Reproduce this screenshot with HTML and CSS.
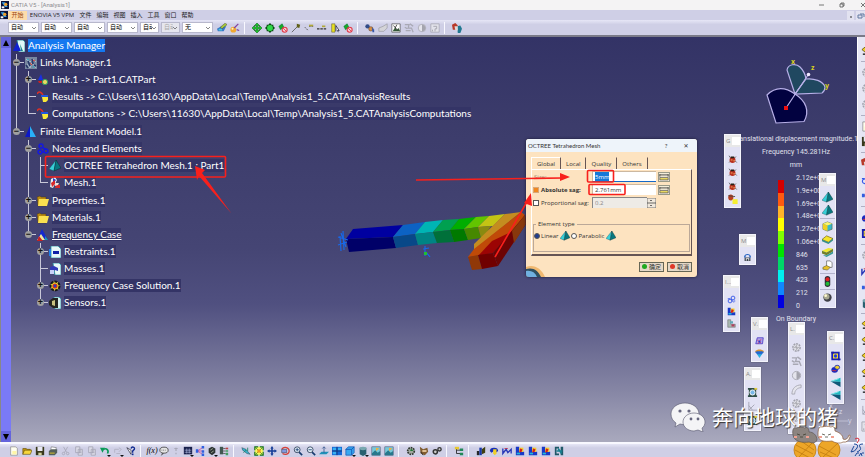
FILE: index.html
```html
<!DOCTYPE html>
<html lang="en">
<head>
<meta charset="utf-8">
<title>CATIA V5 - [Analysis1]</title>
<link rel="stylesheet" href="styles.css">
</head>
<body>
<svg class="defs" aria-hidden="true">
  <symbol id="app" viewBox="0 0 12 12"><rect width="12" height="12" fill="#0b1238"/><path d="M1 2h5l4 7H6z" fill="#39a0e8"/><circle cx="7" cy="5" r="2.500" fill="#f0a028"/><path d="M1 8h4v3H1z" fill="#fff"/></symbol>
  <symbol id="new" viewBox="0 0 12 12"><path d="M2 1h6l2 2v8H2z" fill="#fffef0" stroke="#777" stroke-width=".7"/><path d="M4 6h5v4H4z" fill="#fff6a8"/></symbol>
  <symbol id="open" viewBox="0 0 12 12"><path d="M1 10V3h4l1 1h4v2" fill="#c89a10" stroke="#5c4600" stroke-width=".7"/><path d="M1 10l2-5h9l-2 5z" fill="#f7d63c" stroke="#5c4600" stroke-width=".7"/></symbol>
  <symbol id="save" viewBox="0 0 12 12"><path d="M1 1h10v10H1z" fill="#38381c"/><path d="M3 1h6v5H3z" fill="#e8e8f4"/><path d="M4 8h4v3H4z" fill="#d4d4a0"/></symbol>
  <symbol id="print" viewBox="0 0 12 12"><path d="M4 1l6 1-1 4H3z" fill="#fff" stroke="#555" stroke-width=".6"/><path d="M1 6l3-2h7v4l-3 3H1z" fill="#55605c"/><path d="M2 8h6v1H2z" fill="#f0d020"/></symbol>
  <symbol id="cut" viewBox="0 0 12 12"><path d="M3 1l4 7M8 1L4 8" stroke="#a8a8b8" fill="none"/><circle cx="3" cy="9" r="1.500" stroke="#a8a8b8" fill="none"/><circle cx="8" cy="9" r="1.500" stroke="#a8a8b8" fill="none"/></symbol>
  <symbol id="copy" viewBox="0 0 12 12"><path d="M2 1h5v7H2zM5 4h5v7H5z" stroke="#a4a4b4" fill="#dcdce8"/><path d="M6 6h3M6 8h3" stroke="#a4a4b4"/></symbol>
  <symbol id="undo" viewBox="0 0 12 12"><path d="M4 4c4-2 7 1 5 5" fill="none" stroke="#0a9a58" stroke-width="2"/><path d="M0 2l6 0-3 6z" fill="#0a9a58"/></symbol>
  <symbol id="redo" viewBox="0 0 12 12"><path d="M2 8V4h5M7 2l3 2-3 3M4 9h5" fill="none" stroke="#b0b0c0"/></symbol>
  <symbol id="help" viewBox="0 0 12 12"><path d="M1 2l5 8V5z" fill="#fff" stroke="#223" stroke-width=".8"/><path d="M6 3c1-3 5-2 4 1L8 6v2" fill="none" stroke="#102a90" stroke-width="1.600"/><path d="M7 9h2v2H7z" fill="#102a90"/></symbol>
  <symbol id="bubble" viewBox="0 0 12 12"><ellipse cx="6" cy="5" rx="5" ry="3.600" fill="#e4e4e4" stroke="#444"/><path d="M4 8l-2 4 4-3" fill="#555"/><path d="M3 5h6" stroke="#666" stroke-dasharray="1 1"/></symbol>
  <symbol id="dim" viewBox="0 0 12 12"><path d="M6 2v4M6 8v2M4 3h4" stroke="#a8a8b8" stroke-width="1.400"/></symbol>
  <symbol id="table" viewBox="0 0 12 12"><rect x="1" y="1" width="10" height="9" fill="#18204c"/><path d="M2 5h8M2 7.500h8M4.500 3v6M7.500 3v6" stroke="#c0c8f0" stroke-width=".7"/></symbol>
  <symbol id="graph" viewBox="0 0 12 12"><path d="M3 6l6-4M3 6h6M3 6l6 4" stroke="#d050a0"/><path d="M1 4h3v4H1zM8 0h3v3H8zM8 5h3v3H8zM8 9h3v3H8z" fill="#3060e0"/></symbol>
  <symbol id="shield" viewBox="0 0 12 12"><path d="M2 3l4-2 4 2v5l-4 3-4-3z" fill="#2c3434"/><path d="M4 5l3-2M5 8l3-2" stroke="#aab4a0"/></symbol>
  <symbol id="struct" viewBox="0 0 12 12"><path d="M1 1h4v9H1z" fill="#405850"/><path d="M5 3h3M5 6h3M5 9h3" stroke="#555"/><path d="M8 2h3v2H8z" fill="#c04040"/><path d="M8 5h3v2H8zM8 8h3v3H8z" fill="#40a060"/></symbol>
  <symbol id="fly" viewBox="0 0 12 12"><path d="M1 2l5 2 5 6-4-1-5-4z" fill="#38b0c8" stroke="#234" stroke-width=".5"/><path d="M3 8l3-3M8 2v4" stroke="#1c8060"/></symbol>
  <symbol id="fit" viewBox="0 0 12 12"><rect x="1" y="1" width="10" height="10" fill="#f8f860"/><path d="M1 5V1h4M7 1h4v4M11 7v4H7M5 11H1V7" fill="none" stroke="#107020" stroke-width="1.400"/><path d="M2 2l8 8M10 2l-8 8" stroke="#107020" stroke-width=".8"/><rect x="4" y="4" width="4" height="4" fill="#ef9b20"/></symbol>
  <symbol id="pan" viewBox="0 0 12 12"><path d="M6 0l2 3H7v2h2V4l3 2-3 2V7H7v2h1l-2 3-2-3h1V7H3v1L0 6l3-2v1h2V3H4z" fill="#173f98"/></symbol>
  <symbol id="rotate" viewBox="0 0 12 12"><path d="M2 4c3-4 9-2 9 2s-5 5-8 3" fill="none" stroke="#d84038" stroke-width="1.500"/><path d="M2 4h6v4H2z" fill="#8098e0" stroke="#334" stroke-width=".6"/></symbol>
  <symbol id="zin" viewBox="0 0 12 12"><path d="M7 7l4 4" stroke="#173a70" stroke-width="2"/><circle cx="5" cy="4.500" r="3.500" fill="#e4f0f8" stroke="#2b3c58"/><path d="M3 4.500h4M5 2.500v4" stroke="#173a70"/></symbol>
  <symbol id="zout" viewBox="0 0 12 12"><path d="M7 7l4 4" stroke="#173a70" stroke-width="2"/><circle cx="5" cy="4.500" r="3.500" fill="#e4f0f8" stroke="#2b3c58"/><path d="M3 4.500h4" stroke="#173a70"/></symbol>
  <symbol id="normal" viewBox="0 0 12 12"><path d="M0 10l3-3h9l-3 3z" fill="#2090b8"/><path d="M6 8V1M4 3l2-2 2 2" stroke="#385890" fill="none"/></symbol>
  <symbol id="views" viewBox="0 0 12 12"><rect x="0" y="1" width="12" height="10" fill="#1468d8"/><path d="M1 2h4v3H1zM7 2h4v3H7zM1 7h4v3H1z" fill="#38b0f0"/><path d="M6 1v10M0 6h12" stroke="#123070"/></symbol>
  <symbol id="cube" viewBox="0 0 12 12"><path d="M1 4l3-3h7v7l-3 3H1z" fill="#38a8f0" stroke="#1450b0" stroke-width=".8"/><path d="M1 4h7v7M8 4l3-3" fill="none" stroke="#1450b0"/></symbol>
  <symbol id="cyl" viewBox="0 0 12 12"><path d="M2 2h8v8l-4 2-4-2z" fill="#296070"/><ellipse cx="6" cy="3" rx="4" ry="2" fill="#78a8b0"/></symbol>
  <symbol id="img" viewBox="0 0 12 12"><rect x="1" y="1" width="10" height="10" fill="#78c8d8" stroke="#446" stroke-width=".6"/><path d="M1 9l4-4 3 3 3-2v5H1z" fill="#28788c"/><path d="M6 2l4 1-4 3z" fill="#f0b040"/></symbol>
  <symbol id="gear" viewBox="0 0 12 12"><circle cx="6" cy="6" r="4" fill="#a0a8a0" stroke="#303830" stroke-width="2" stroke-dasharray="2 1"/><path d="M5 6h4L6 3z" fill="#207838"/></symbol>
  <symbol id="horse" viewBox="0 0 12 12"><path d="M1 1l4 3 5-2 1 5-4 4-5-2z" fill="#805c30"/><path d="M4 5h5v2H4z" fill="#f0d4a8"/><path d="M2 7l3 4" stroke="#222"/></symbol>
  <symbol id="gears" viewBox="0 0 12 12"><circle cx="4" cy="7" r="2.500" fill="#ccc" stroke="#333" stroke-width="1.800"/><circle cx="9" cy="4" r="2" fill="#ccc" stroke="#333" stroke-width="1.600"/></symbol>
  <symbol id="tree" viewBox="0 0 12 12"><path d="M3 2v7h5M3 5h5" stroke="#222" fill="none"/><path d="M1 1h5v3H1z" fill="#e8c830"/><path d="M7 3h4v3H7zM7 8h4v3H7z" fill="#208858"/></symbol>
  <symbol id="bars" viewBox="0 0 12 12"><path d="M1 6h3v5H1z" fill="#282828"/><path d="M4 2h3v9H4z" fill="#1838a8"/><path d="M7 4l4-3v7l-4 2z" fill="#404010"/></symbol>
  <symbol id="arc" viewBox="0 0 12 12"><path d="M1 6a5 4 0 0110 0L8 8 6 6 3 8z" fill="#1830b8"/><path d="M5 4h4v5l-2 2-2-2z" fill="#f0d028"/></symbol>
  <symbol id="wave" viewBox="0 0 12 12"><path d="M1 3v6l4-5 2 4 4-4v5" stroke="#2838b8" fill="none" stroke-width="1.600"/><path d="M3 3h4" stroke="#c03050"/></symbol>
  <symbol id="stress" viewBox="0 0 12 12"><path d="M1 1h4v6h6v4H1z" fill="#1838c8"/><path d="M5 2h5v5H5z" fill="#f0d030"/><path d="M6 3l3 1-1 3-3 1z" fill="#d82018"/><path d="M2 8h4v2H2z" fill="#20b8d8"/></symbol>
  <symbol id="dimens" viewBox="0 0 12 12"><path d="M1 1h5v2H3v6h3v2H1zM11 1H8v10h3z" fill="#205868"/><path d="M3 6h7M5 3l4 6" stroke="#188090" stroke-width="2"/></symbol>
  <symbol id="palette" viewBox="0 0 12 12"><path d="M0 7l5-3h6l-3 6H1z" fill="#3878c8"/><path d="M4 5l6-5 2 2-6 5z" fill="#a8c838" stroke="#333" stroke-width=".5"/><path d="M2 7h4v2H2z" fill="#48c8d8"/></symbol>
  <symbol id="magic" viewBox="0 0 12 12"><circle cx="4" cy="8" r="3.500" fill="#f0a830"/><circle cx="3" cy="7" r="1.200" fill="#fff0c0"/><path d="M5 6l5-5M8 8l3 1" stroke="#8040a0" stroke-width="1.400"/></symbol>
  <symbol id="gcross" viewBox="0 0 12 12"><path d="M6 0l3 3H7v2h2V3l3 3-3 3V7H7v2h2l-3 3-3-3h2V7H3v2L0 6l3-3v2h2V3H3z" fill="#18c828" stroke="#0a5010" stroke-width=".6"/></symbol>
  <symbol id="gtarget" viewBox="0 0 12 12"><path d="M6 0l2 2 2 0v2l2 2-2 2v2H8l-2 2-2-2H2V8L0 6l2-2V2h2z" fill="#084c10"/><circle cx="6" cy="6" r="3.500" fill="#30d848"/></symbol>
  <symbol id="gstop" viewBox="0 0 12 12"><path d="M1 4l4-3 2 4-4 3z" fill="#18a828" stroke="#073" stroke-width=".6"/><circle cx="8" cy="8" r="3" fill="#f8c8d0" stroke="#e03848" stroke-width="1.300"/><path d="M6 6l4 4" stroke="#e03848"/></symbol>
  <symbol id="pin" viewBox="0 0 12 12"><path d="M1 11l7-7" stroke="#555"/><path d="M7 1l4 1-1 4-3-1z" fill="#606018"/></symbol>
  <symbol id="dash" viewBox="0 0 12 12"><path d="M1 5l4 4M6 4h5" stroke="#444" stroke-dasharray="2 1"/><path d="M6 2h5v2H6z" fill="#b0a838"/></symbol>
  <symbol id="dots" viewBox="0 0 12 12"><path d="M0 7h12" stroke="#333" stroke-width="1.500" stroke-dasharray="3 1"/><path d="M6 3h4v2H6z" fill="#b0a838"/></symbol>
  <symbol id="yruler" viewBox="0 0 12 12"><path d="M2 1h4v10H2z" fill="#e8e020" stroke="#553" stroke-width=".6"/><path d="M7 3l4 6H9l1 2M7 3v7" stroke="#334" fill="#eee"/></symbol>
  <symbol id="bluegears" viewBox="0 0 12 12"><circle cx="3" cy="4" r="2.600" fill="#324c88"/><circle cx="7" cy="7" r="2.600" fill="#d89040" stroke="#532" stroke-width=".6"/><path d="M8 5l3 3v3H9z" fill="#3858a8"/></symbol>
  <symbol id="ghand" viewBox="0 0 12 12"><path d="M1 6l5-2 5-3v5l-4 4H1z" fill="#d4d4d8" stroke="#a4a4ac"/></symbol>
  <symbol id="win" viewBox="0 0 12 12"><path d="M1 1h10v10H1z" fill="#fff" stroke="#333" stroke-width=".7"/><path d="M2 10l3-5 2 3 2-2 2 4z" fill="#345a38"/><path d="M3 3l5 6M7 2l-2 4" stroke="#333"/></symbol>
  <symbol id="gmesh" viewBox="0 0 12 12"><circle cx="6" cy="6" r="4" fill="#dcdce4" stroke="#a0a0ac" stroke-width="1.600" stroke-dasharray="2 1"/><path d="M3 6h6M6 3v6M4 4l4 4" stroke="#a8a8b0" stroke-width=".8"/></symbol>
  <symbol id="gmesh2" viewBox="0 0 12 12"><path d="M1 2h5l-1 4h4l2 5M2 9h6M7 1l4 3M1 5l3 2" stroke="#a8a8b4" fill="none" stroke-width="1.500"/></symbol>
  <symbol id="gsph" viewBox="0 0 12 12"><circle cx="6" cy="6" r="4.500" fill="#e4e4ec" stroke="#a8a8b4"/><path d="M6 2v8a4 4 0 000-8M3 4l3 2" fill="#a4a4ae"/></symbol>
  <symbol id="garc" viewBox="0 0 12 12"><path d="M1 11C1 5 5 1 11 1v3C7 4 4 7 4 11z" fill="#e4e4ec" stroke="#a8a8b4"/></symbol>
  <symbol id="gq" viewBox="0 0 12 12"><path d="M1 1h10v10H1z" fill="#e2e2ea" stroke="#a8a8b4"/><path d="M4 4h4v3H6v3M3 8v2" stroke="#a0a0aa" fill="none"/></symbol>
  <symbol id="swirl" viewBox="0 0 12 12"><path d="M0 2l4-2 3 3-2 5H1z" fill="#b83828"/><path d="M6 4l4-1 2 4-2 5H7z" fill="#207890"/><path d="M3 4h4v5H4z" fill="#e0d8d8"/></symbol>
  <symbol id="bug" viewBox="0 0 12 12"><path d="M2 2l2 3M10 3L8 5M2 10l2-2M11 10L9 8" stroke="#333" stroke-width=".8"/><ellipse cx="6" cy="7" rx="3.500" ry="3.500" fill="#b83020"/><path d="M4 3h4v2H4z" fill="#282018"/><path d="M4 7h2M7 8h2" stroke="#f8c070"/></symbol>
  <symbol id="bugy" viewBox="0 0 12 12"><ellipse cx="4" cy="4" rx="3" ry="3.500" fill="#b84020"/><path d="M6 6h6v6H6z" fill="#f4ee30"/><path d="M1 2l8 1" stroke="#444"/></symbol>
  <symbol id="tet" viewBox="0 0 12 12"><path d="M7 0L0 9l5 2z" fill="#38d0d8" stroke="#145" stroke-width=".4"/><path d="M7 0L5 11l7-3z" fill="#087880" stroke="#022" stroke-width=".4"/></symbol>
  <symbol id="ybox" viewBox="0 0 12 12"><path d="M1 3l5-2 5 2v6l-5 2-5-2z" fill="#38b8c8" stroke="#553" stroke-width=".6"/><path d="M1 3l5-2 5 2-5 2z" fill="#fff46a"/><path d="M1 3l5 2v6l-5-2z" fill="#f0d020"/></symbol>
  <symbol id="slab" viewBox="0 0 12 12"><path d="M0 6l5-4 7 3-5 4z" fill="#f4e428" stroke="#554400" stroke-width=".6"/><path d="M0 6l7 3 5-4v2l-5 4-7-3z" fill="#389088"/></symbol>
  <symbol id="slab2" viewBox="0 0 12 12"><path d="M0 4l7-3 5 1-7 4z" fill="#f0e830"/><path d="M0 4l5 2 7-4v3L5 9 0 7z" fill="#70802c"/><path d="M1 9l4 2 7-4V5L5 9z" fill="#389898"/></symbol>
  <symbol id="cbox" viewBox="0 0 12 12"><path d="M5 1h4l2 2v5H5z" fill="#fff" stroke="#555" stroke-width=".7"/><path d="M1 8l4-2 4 2-3 3-5-1z" fill="#e8c028" stroke="#553" stroke-width=".6"/></symbol>
  <symbol id="traffic" viewBox="0 0 12 12"><rect x="3" y="0" width="6" height="12" rx="3" fill="#303038"/><circle cx="6" cy="3.500" r="2.200" fill="#e02020"/><circle cx="6" cy="8.500" r="2.200" fill="#20b838"/></symbol>
  <symbol id="sphere" viewBox="0 0 12 12"><circle cx="6" cy="6" r="4.500" fill="#404048"/><circle cx="5" cy="5" r="3.200" fill="#a8a890"/><circle cx="4" cy="4" r="1.500" fill="#fff8d0"/></symbol>
  <symbol id="squig" viewBox="0 0 12 12"><g fill="none" stroke="#3858e8" stroke-width="1.200"><circle cx="4" cy="8" r="2.500"/><circle cx="8" cy="4" r="2.500"/><path d="M5 5l4 5M9 8h2M1 5h3"/></g></symbol>
  <symbol id="greybox" viewBox="0 0 12 12"><path d="M1 1h4v6h6v4H1z" fill="#a8b8b0" stroke="#555" stroke-width=".6"/><path d="M4 3h4v3H4z" fill="#60a8b8"/><path d="M6 7h4v3H6z" fill="#b04060"/></symbol>
  <symbol id="device" viewBox="0 0 12 12"><path d="M1 4c2-4 8-4 10 0" stroke="#2060c0" fill="none" stroke-width="1.800"/><path d="M1 6h10v6H1z" fill="#38404c"/><path d="M3 7h6v1H3zM3 9h2v2H3zM7 9h2v2H7z" fill="#f0f0f0"/><path d="M0 4h3v2H0zM9 4h3v2H9z" fill="#2060c0"/></symbol>
  <symbol id="purple" viewBox="0 0 12 12"><path d="M3 1h8l-1 8H1z" fill="#b0a0e8" stroke="#4030c0"/><path d="M3 4l5 4M8 3l-4 6" stroke="#d02858"/><circle cx="6" cy="6" r="1.500" fill="#2840d0"/></symbol>
  <symbol id="gem" viewBox="0 0 12 12"><path d="M0 3c3-3 9-3 12 0L9 6H3z" fill="#d89030"/><path d="M2 6h8l-4 6z" fill="#28b0e0"/><path d="M0 4l3-1h6l3 1-3 3H3z" fill="#2468d0"/></symbol>
  <symbol id="camera" viewBox="0 0 12 12"><path d="M1 1h10v2H10v6h1v2H1V9h1V3H1z" fill="#305048"/><circle cx="6" cy="6" r="2.800" fill="#78b8e8" stroke="#fff"/><path d="M8 1h3v2H8z" fill="#e8d040"/></symbol>
  <symbol id="gaxis" viewBox="0 0 12 12"><path d="M2 1v9h9M2 10l6-6M2 5l4 5" stroke="#a4a4b4" fill="none"/></symbol>
  <symbol id="bluey" viewBox="0 0 12 12"><path d="M2 2h8v8H2z" fill="#f4d830" stroke="#1820b8" stroke-width="2"/><circle cx="6" cy="6" r="2" fill="#203ce0"/><path d="M1 1h3v2H1zM9 9h3v2H9z" fill="#1820a0"/></symbol>
  <symbol id="bluey2" viewBox="0 0 12 12"><ellipse cx="5" cy="7" rx="4" ry="3.500" fill="#1828c0"/><ellipse cx="8" cy="4" rx="3" ry="2.500" fill="#f0d028" stroke="#1828c0"/><path d="M2 8h5" stroke="#e03030"/></symbol>
  <symbol id="teal" viewBox="0 0 12 12"><path d="M0 5l12-4v5z" fill="#20b8c0"/><path d="M0 5l12 1v6z" fill="#105878"/><path d="M1 5l9-3" stroke="#90f0f0"/></symbol>
  <symbol id="yarrow" viewBox="0 0 12 12"><path d="M1 5l5-4v2h6v4H6v2z" fill="#f0d028" stroke="#554400" stroke-width=".8"/><path d="M2 10h8" stroke="#222" stroke-width="1.500"/></symbol>
  <symbol id="folder" viewBox="0 0 12 12"><path d="M0 2l3-1 1 1h5v9H1z" fill="#b88a10" stroke="#432" stroke-width=".5"/><path d="M2 4h10l-2 7H1z" fill="#fae050"/></symbol>
  <symbol id="root" viewBox="0 0 12 12"><path d="M4 0h6l2 2v10H6z" fill="#e0f8f8" stroke="#208890" stroke-width=".8"/><path d="M4 2l4 9H0z" fill="#1020d0"/><path d="M7 4l3 7H8z" fill="#188888"/></symbol>
  <symbol id="links" viewBox="0 0 12 12"><rect width="12" height="12" fill="#7888a0"/><path d="M1 2l4 3 3-3 3 3M2 7l3 4 2-5 4 5" stroke="#b8c8d8" fill="none" stroke-width=".8"/><path d="M3 4l2 5M7 2l1 5M9 8l2 1M1 8l2 3" stroke="#283868" stroke-width="1.600"/><path d="M5 6l2 2M8 3l2 1" stroke="#e04030"/><path d="M2 2l2 1M8 9l1 2" stroke="#30b0c0"/></symbol>
  <symbol id="link" viewBox="0 0 12 12"><path d="M4 0l2 6H1z" fill="#1830e0"/><path d="M1 7h4v2H2z" fill="#c82020"/><circle cx="8" cy="8" r="2.600" fill="#e8d860" stroke="#30a060"/></symbol>
  <symbol id="result" viewBox="0 0 12 12"><path d="M0 3c2-4 5-1 6 1" stroke="#d83028" fill="none" stroke-width="1.600"/><path d="M5 6h6v3l-2 2H6z" fill="#f8e838"/><path d="M4 4h7v2H4z" fill="#2058e0"/></symbol>
  <symbol id="fem" viewBox="0 0 12 12"><path d="M5 0v11H0z" fill="#0c18c8"/><path d="M5 0l6 11H5z" fill="#28b0f8"/></symbol>
  <symbol id="nodes" viewBox="0 0 12 12"><g fill="none" stroke="#1418e0" stroke-width="1.400"><circle cx="4" cy="3" r="2"/><circle cx="3" cy="9" r="2"/><circle cx="9" cy="8" r="2"/><path d="M6 5l3 1M5 9h2"/></g></symbol>
  <symbol id="mesh" viewBox="0 0 12 12"><path d="M2 2l4-2 2 3-4 8-3-1z" fill="#e8f0f0"/><path d="M4 1l3 2-3 4z" fill="#2038d0"/><path d="M2 6l4-3v4L3 10zM7 8h4v3H6z" fill="#d82828"/><path d="M6 6l4 0-1 2-3 1z" fill="#f0e0d8"/></symbol>
  <symbol id="freq" viewBox="0 0 12 12"><path d="M5 0l6 11H0z" fill="#1428d0"/><path d="M4 5l4 6H0z" fill="#f0e8a0"/><path d="M2 7l4 5H0z" fill="#c82020"/><path d="M8 7l3 4H8z" fill="#2098b0"/></symbol>
  <symbol id="restr" viewBox="0 0 12 12"><path d="M2 0h7l3 3v9H2z" fill="#e8f8f8" stroke="#2898a8" stroke-width=".8"/><path d="M1 3v7" stroke="#2080e8" stroke-width="2"/><path d="M4 5h6v3H4z" fill="#1020a8"/></symbol>
  <symbol id="mass" viewBox="0 0 12 12"><path d="M4 0h6l2 2v10H6z" fill="#e8f8f8" stroke="#2898a8" stroke-width=".8"/><path d="M1 4l4-1 4 2v3L6 7l-4 4z" fill="#3038b8"/><path d="M1 7h4v4H1z" fill="#c8d0f8"/></symbol>
  <symbol id="sol" viewBox="0 0 12 12"><circle cx="6" cy="6" r="4.500" fill="#f0e030" stroke="#181818" stroke-width="2" stroke-dasharray="3 1"/><circle cx="6" cy="6" r="2.600" fill="#d83020"/><circle cx="6" cy="6" r="1.400" fill="#2040c0"/></symbol>
  <symbol id="sensor" viewBox="0 0 12 12"><path d="M5 0h5l2 2v10H6z" fill="#d8f0f0" stroke="#2898a8" stroke-width=".8"/><path d="M0 4l4-3h5v10H4L0 8z" fill="#242420"/><path d="M3 4l3-1v6L3 8z" fill="#c8c080"/></symbol>
</svg>

<header>
  <div class="titlebar">
    <svg class="app-icon"><use href="#app"/></svg><span>CATIA V5 - [Analysis1]</span>
    <svg class="winctl" viewBox="0 0 50 10"><g fill="none" stroke="#555" stroke-width=".8"><path d="M4 5h5M25 4h3v3h-3zM26 4V3h3v3h-1M46 3l4 4M50 3l-4 4"/></g></svg>
  </div>
  <nav class="menubar">
    <svg class="app-icon"><use href="#app"/></svg>
    <button class="current">开始</button><button class="wide">ENOVIA V5 VPM</button><button>文件</button><button>编辑</button><button>视图</button><button>插入</button><button>工具</button><button>窗口</button><button>帮助</button>
    <svg class="mdictl" viewBox="0 0 18 9"><path d="M0 0h7v9H0zM9 0h9v9H9z" fill="#e2e2f0"/><path d="M3 6h2" stroke="#333"/><path d="M11 4h4v3h-4zM13 3h4v3" stroke="#6078a0" fill="none"/></svg>
  </nav>
  <div class="toolbar top">
    <div class="combos">
      <span class="combo"><select aria-label="Fill colour"><option>自动</option></select><svg viewBox="0 0 6 4"><path d="M1 1l2 2 2-2"/></svg></span>
      <span class="combo"><select aria-label="Transparency"><option>自动</option></select><svg viewBox="0 0 6 4"><path d="M1 1l2 2 2-2"/></svg></span>
      <span class="combo"><select aria-label="Line weight"><option>自动</option></select><svg viewBox="0 0 6 4"><path d="M1 1l2 2 2-2"/></svg></span>
      <span class="combo"><select aria-label="Line type"><option>自动</option></select><svg viewBox="0 0 6 4"><path d="M1 1l2 2 2-2"/></svg></span>
      <span class="combo narrow"><select aria-label="Point symbol"><option>自动</option></select><svg viewBox="0 0 6 4"><path d="M1 1l2 2 2-2"/></svg></span>
      <span class="combo narrow off"><select aria-label="Render style" disabled><option>自动</option></select><svg viewBox="0 0 6 4"><path d="M1 1l2 2 2-2"/></svg></span>
      <span class="combo"><select aria-label="Layer"><option>无</option></select><svg viewBox="0 0 6 4"><path d="M1 1l2 2 2-2"/></svg></span>
    </div>
    <div class="group"><button aria-label="Painter"><svg><use href="#palette"/></svg></button><button aria-label="Wizard"><svg><use href="#magic"/></svg></button></div>
    <div class="group"><button aria-label="Move"><svg><use href="#gcross"/></svg></button><button aria-label="Target"><svg><use href="#gtarget"/></svg></button><button aria-label="Stop"><svg><use href="#gstop"/></svg></button><button aria-label="Pin"><svg><use href="#pin"/></svg></button><button aria-label="Segment"><svg><use href="#dash"/></svg></button><button aria-label="Line"><svg><use href="#dots"/></svg></button><button aria-label="Ruler"><svg><use href="#yruler"/></svg></button><button aria-label="Disable"><svg><use href="#gstop"/></svg></button></div>
    <div class="group"><button aria-label="Compute"><svg><use href="#bluegears"/></svg></button><button aria-label="Hand"><svg><use href="#ghand"/></svg></button><button aria-label="Window"><svg><use href="#win"/></svg></button><button aria-label="Mesh part"><svg><use href="#gmesh2"/></svg></button><button aria-label="Mesh"><svg><use href="#gsph"/></svg></button><button aria-label="Query"><svg><use href="#gq"/></svg></button></div>
    <div class="group"><button aria-label="Update"><svg><use href="#swirl"/></svg></button></div>
  </div>
</header>

<main>
  <div class="scroller"><button aria-label="Scroll up"><svg viewBox="0 0 8 8"><path d="M4 1l3 6H1z"/></svg></button><button aria-label="Scroll down"><svg viewBox="0 0 8 8"><path d="M4 7l3-6H1z"/></svg></button></div>

  <section class="stage">
    <ul class="tree">
      <li><span class="row"><svg><use href="#root"/></svg><b class="selected">Analysis Manager</b></span>
        <ul>
          <li class="open"><span class="row"><svg><use href="#links"/></svg><b>Links Manager.1</b></span>
            <ul>
              <li class="shut"><span class="row"><svg><use href="#link"/></svg><b>Link.1 -&gt; Part1.CATPart</b></span></li>
              <li><span class="row"><svg><use href="#result"/></svg><b>Results -&gt; C:\Users\11630\AppData\Local\Temp\Analysis1_5.CATAnalysisResults</b></span></li>
              <li><span class="row"><svg><use href="#result"/></svg><b>Computations -&gt; C:\Users\11630\AppData\Local\Temp\Analysis1_5.CATAnalysisComputations</b></span></li>
            </ul>
          </li>
          <li class="open"><span class="row"><svg><use href="#fem"/></svg><b>Finite Element Model.1</b></span>
            <ul>
              <li class="open"><span class="row"><svg><use href="#nodes"/></svg><b>Nodes and Elements</b></span>
                <ul>
                  <li><span class="row"><svg><use href="#tet"/></svg><b>OCTREE Tetrahedron Mesh.1 : Part1</b></span></li>
                  <li><span class="row"><svg><use href="#mesh"/></svg><b>Mesh.1</b></span></li>
                </ul>
              </li>
              <li class="shut"><span class="row"><svg><use href="#folder"/></svg><b>Properties.1</b></span></li>
              <li class="shut"><span class="row"><svg><use href="#folder"/></svg><b>Materials.1</b></span></li>
              <li class="open"><span class="row"><svg><use href="#freq"/></svg><b class="active">Frequency Case</b></span>
                <ul>
                  <li class="shut"><span class="row"><svg><use href="#restr"/></svg><b>Restraints.1</b></span></li>
                  <li><span class="row"><svg><use href="#mass"/></svg><b>Masses.1</b></span></li>
                  <li class="shut"><span class="row"><svg><use href="#sol"/></svg><b>Frequency Case Solution.1</b></span></li>
                  <li class="shut"><span class="row"><svg><use href="#sensor"/></svg><b>Sensors.1</b></span></li>
                </ul>
              </li>
            </ul>
          </li>
        </ul>
      </li>
    </ul>
  </section>

  <svg class="scene" viewBox="0 37 865 405">
    <g stroke="#b8b0e8" stroke-width="1.200">
      <path d="M767 95L776 123L804 121.500C810 111 806 101 795 94C785 87 776 86 767 95z" fill="#020240"/>
      <path d="M795 94L787 70C788 64 796 63 800 67Q805 72 806 79z" fill="#204860"/>
      <path d="M795 94L806 79C814 78 823 81 825 87Q825 91 822 93z" fill="#204860"/>
      <path d="M786 108L808 75"/>
    </g>
    <circle cx="808.500" cy="74.500" r="1.800" fill="#f0e8ff"/>
    <path d="M784 106h4v4h-4z" fill="#f01010"/>
    <g class="axis"><text x="791" y="64">x</text><text x="811" y="70">z</text><text x="825" y="88">y</text></g>

    <g>
      <path d="M353 229L403 225L393 237L346 239z" fill="#0000a0"/><path d="M346 239L393 237L396 248L349 252z" fill="#000068"/>
      <path d="M403 225L425 222L415 234L393 237z" fill="#0c62c4"/><path d="M393 237L415 234L418 245L396 248z" fill="#084888"/>
      <path d="M425 222L443 220L433 232L415 234z" fill="#00b4b4"/><path d="M415 234L433 232L437 243L418 245z" fill="#008484"/>
      <path d="M443 220L459 219L450 230L433 232z" fill="#00a050"/><path d="M433 232L450 230L454 242L437 243z" fill="#00703a"/>
      <path d="M459 219L476 217L464 229L450 230z" fill="#00ae00"/><path d="M450 230L464 229L468 240L454 242z" fill="#007a00"/>
      <path d="M476 217L489 216L478 227L464 229z" fill="#62c400"/><path d="M464 229L478 227L481 238L468 240z" fill="#468800"/>
      <path d="M489 216L505 214L493 226L478 227z" fill="#c4c414"/><path d="M478 227L491 226L483 238L481 238z" fill="#8a8a10"/>
      <path d="M505 214L521 212L474 250L474 244z" fill="#c48c20"/>
      <path d="M521 212L525 215L513 232L478 256L468 257L474 249z" fill="#c04a08"/>
      <path d="M492 241L513 231L493 253L478 256z" fill="#9c0404"/>
      <path d="M525 215L526 224L498 266L493 253z" fill="#6c0404"/><path d="M525 215L526 224L514 243L512 231z" fill="#88380c"/>
      <path d="M468 257L478 255L482 269L472 270z" fill="#903808"/><path d="M478 255L493 253L498 266L482 269z" fill="#700000"/>
    </g>
    <path d="M343 231l1 19M338 237l10 3M340 236l1 15M338 245l9-3M341 233l5 14M425 246v10M423 249l6-1M426 252l4 5" fill="none" stroke="#1868e8" stroke-width="1.200"/>
    <path d="M424 252h3v3h-3z" fill="#20c030"/>
    <g stroke="#c8c8dc" fill="none" stroke-width=".8"><path d="M826 421h22M826 421l12-9"/></g>
    <g class="axis pale"><text x="829" y="408">x</text><text x="839" y="414">z</text><text x="848" y="423">y</text></g>
  </svg>

  <section class="legend">
    <p class="end"><span>Translational displacement magnitude.1</span></p>
    <p>Frequency 145.281Hz</p>
    <p>mm</p>
    <div class="scale">
      <div class="ramp"><i></i><i></i><i></i><i></i><i></i><i></i><i></i><i></i><i></i><i></i></div>
      <div class="values"><span>2.12e+003</span><span>1.9e+003</span><span>1.69e+003</span><span>1.48e+003</span><span>1.27e+003</span><span>1.06e+003</span><span>846</span><span>635</span><span>423</span><span>212</span><span>0</span></div>
    </div>
    <p>On Boundary</p>
  </section>

  <aside class="palette p-g"><h2>G<button aria-label="Close"></button></h2><svg><use href="#bug"/></svg><svg><use href="#bug"/></svg><svg><use href="#bug"/></svg><svg><use href="#bugy"/></svg></aside>
  <aside class="palette p-m"><h2>M<button aria-label="Close"></button></h2><svg><use href="#tet"/></svg><svg><use href="#tet"/></svg><hr><svg><use href="#ybox"/></svg><svg><use href="#slab"/></svg><svg><use href="#slab2"/></svg><svg><use href="#cbox"/></svg><hr><svg><use href="#traffic"/></svg><hr><svg><use href="#sphere"/></svg></aside>
  <aside class="palette p-n"><h2>M<button aria-label="Close"></button></h2><svg><use href="#device"/></svg></aside>
  <aside class="palette p-i"><h2>I...<button aria-label="Close"></button></h2><svg><use href="#squig"/></svg><svg><use href="#stress"/></svg><svg><use href="#greybox"/></svg></aside>
  <aside class="palette p-v"><h2>V.<button aria-label="Close"></button></h2><svg><use href="#purple"/></svg><svg><use href="#gem"/></svg></aside>
  <aside class="palette p-l"><h2>L.<button aria-label="Close"></button></h2><svg><use href="#gmesh"/></svg><svg><use href="#gmesh2"/></svg><svg><use href="#gsph"/></svg><svg><use href="#garc"/></svg><svg><use href="#gmesh"/></svg><svg><use href="#gmesh"/></svg></aside>
  <aside class="palette p-c"><h2>C.<button aria-label="Close"></button></h2><svg><use href="#bluey"/></svg><svg><use href="#bluey2"/></svg><svg><use href="#teal"/></svg><svg><use href="#teal"/></svg></aside>
  <aside class="palette p-a"><h2>A.<button aria-label="Close"></button></h2><svg><use href="#camera"/></svg><svg><use href="#gaxis"/></svg><svg><use href="#camera"/></svg></aside>

  <form class="dialog">
    <header><span>OCTREE Tetrahedron Mesh</span><button type="button">?</button><button type="button">✕</button></header>
    <div class="tabs"><button type="button" class="on">Global</button><button type="button">Local</button><button type="button">Quality</button><button type="button">Others</button></div>
    <div class="panel">
      <div class="field"><label for="size" class="size">Size:</label><input id="size" class="focus" type="text" value="5mm"><button type="button" aria-label="Size ruler"><svg viewBox="0 0 12 9"><path d="M1 2h10M1 1v3M11 1v3" stroke="#333" fill="none"/><path d="M1 5h10v3H1z" fill="#e8d860" stroke="#335" stroke-width=".7"/></svg></button></div>
      <div class="field"><input type="checkbox" id="abs" checked><label for="abs" class="strong">Absolute sag:</label><input type="text" aria-label="Absolute sag" value="2.761mm"><button type="button" aria-label="Sag ruler"><svg viewBox="0 0 12 9"><path d="M1 2h10M1 1v3M11 1v3" stroke="#333" fill="none"/><path d="M1 5h10v3H1z" fill="#e8d860" stroke="#335" stroke-width=".7"/></svg></button></div>
      <div class="field"><input type="checkbox" id="prop"><label for="prop">Proportional sag:</label><input class="off" type="text" aria-label="Proportional sag" value="0.2" disabled><svg class="spin" viewBox="0 0 9 10"><path d="M0 0h9v10H0z" fill="#f0e8dc" stroke="#777"/><path d="M0 5h9M3 3l1-1 1 1M3 7l1 1 1-1" stroke="#333" stroke-width=".7" fill="none"/></svg></div>
      <fieldset><legend>Element type</legend>
        <input type="radio" name="kind" id="lin" checked><label for="lin">Linear</label><svg><use href="#tet"/></svg>
        <input type="radio" name="kind" id="par"><label for="par">Parabolic</label><svg><use href="#tet"/></svg>
      </fieldset>
    </div>
    <footer><svg class="swoosh" viewBox="0 0 20 14"><path d="M0 4C8 1 15 5 19 14H0z" fill="#f0b870"/><path d="M0 6c7-2 12 1 15 8H0z" fill="#305060"/><path d="M0 8c5-1 9 1 11 6H0z" fill="#70b0e0"/></svg><button type="button"><i class="ok"></i>确定</button><button type="button"><i class="no"></i>取消</button></footer>
  </form>

  <svg class="scene" viewBox="0 37 865 405">
    <g fill="none" stroke="#f8201c" stroke-width="1.600">
      <rect x="45.500" y="156.500" width="180" height="20.500" rx="1"/>
      <rect x="587.500" y="170.500" width="26" height="11.500" rx="1"/>
      <rect x="589" y="184.500" width="36" height="10" rx="1"/>
      <path d="M416 180L562 178M495 257L528 200"/>
    </g>
    <g fill="#f8201c"><path d="M570 177L560 173V181z"/><path d="M531 193L524 203L532 206z"/><path d="M195 166L205 170L202 173L231.500 213.500L199 176L197 180z"/></g>
  </svg>

  <div class="dock">
    <svg><use href="#yarrow"/></svg><hr><svg><use href="#gmesh"/></svg><svg><use href="#gmesh"/></svg><svg><use href="#gmesh"/></svg><hr><svg><use href="#new"/></svg><svg><use href="#save"/></svg><hr><svg><use href="#swirl"/></svg><svg><use href="#squig"/></svg><svg><use href="#graph"/></svg><hr><svg><use href="#bluey2"/></svg><svg><use href="#bluey"/></svg><hr><svg><use href="#gmesh"/></svg><svg><use href="#wave"/></svg><svg><use href="#graph"/></svg><svg><use href="#cyl"/></svg><hr><svg><use href="#yarrow"/></svg><svg><use href="#yarrow"/></svg><svg><use href="#yarrow"/></svg><svg><use href="#yarrow"/></svg><svg><use href="#yarrow"/></svg><hr><svg><use href="#gaxis"/></svg><svg><use href="#gq"/></svg>
  </div>

  <div class="watermark">
    <svg viewBox="0 0 36 32"><g fill="#f4f4f6" stroke="#55556c" stroke-width=".6"><path d="M15 3C7 3 1 8 1 14c0 4 2 7 5 9l-1 4 5-3c11 3 19-3 19-10C29 8 23 3 15 3z"/><path d="M24 13c-6 0-11 4-11 9s5 9 11 9l4-1 5 2-1-4c2-1 3-4 3-6 0-5-5-9-11-9z"/></g><g fill="#66667e"><circle cx="10" cy="11" r="1.600"/><circle cx="19" cy="11" r="1.600"/><circle cx="21" cy="19" r="1.400"/><circle cx="28" cy="19" r="1.400"/></g></svg>
    <span>奔向地球的猪</span>
  </div>
  <svg class="cats" viewBox="0 0 75 32">
    <g stroke="#c07c10" stroke-width=".8"><circle cx="16" cy="25" r="11" fill="#eda628"/><circle cx="40" cy="25" r="11" fill="#eda628"/><path d="M7 20l17 9M6 25l15 8M10 32L24 17M30 21l17 9M31 27l14 6M34 32L49 18M12 16l13 9" fill="none"/></g>
    <path d="M4 10C3 4 5 2 7 3c3-1 7-1 9 0 3-2 4 2 4 4 4 0 8 3 8 8-2 4-5 3-8 2-6 1-15 0-16-7z" fill="#8c8480" stroke="#5c5450" stroke-width=".7"/>
    <path d="M29 10c0-6 1-9 4-8 3-1 6-1 9 0 3-2 4 2 4 4 6 2 8 5 8 8q4 2 6-4 2 0 1 2-2 6-7 5c-3 2-8 1-11-1-8 1-14 0-14-6z" fill="#fff" stroke="#8c5c38" stroke-width=".7"/>
    <path d="M8 9l3 1M14 10l3-1M11 12h3M33 9l3 1M39 10l3-1M36 12h3" stroke="#332" stroke-width=".7"/>
    <path d="M5 11h3v2H5zM17 11h3v2h-3zM30 11h3v2h-3zM42 11h3v2h-3z" fill="#f0a090"/>
    <path d="M65 19q5 0 3 4-2 4-6 4l3-6M74 19q-5 0-3 3 2 3-3 5" fill="none" stroke="#1c4898"/><path d="M66 14q4-2 4 1l-2 3" stroke="#d82838" fill="none"/><path d="M66 31l2-3h2M70 31l2-3 1 3M75 28h-2" stroke="#1c4898" fill="none"/>
  </svg>
</main>

<footer class="toolbar bottom">
  <div class="group"><button aria-label="New"><svg><use href="#new"/></svg></button><button aria-label="Open"><svg><use href="#open"/></svg></button><button aria-label="Save"><svg><use href="#save"/></svg></button><button aria-label="Print"><svg><use href="#print"/></svg></button><button aria-label="Cut"><svg><use href="#cut"/></svg></button><button aria-label="Copy"><svg><use href="#copy"/></svg></button><button aria-label="Paste"><svg><use href="#copy"/></svg></button><button aria-label="Undo" class="drop"><svg><use href="#undo"/></svg></button><button aria-label="Redo" class="drop"><svg><use href="#redo"/></svg></button><button aria-label="Help"><svg><use href="#help"/></svg></button></div>
  <div class="group tight"><button class="fx">f(x)</button><button aria-label="Comment"><svg><use href="#bubble"/></svg></button><button aria-label="Check"><svg><use href="#dim"/></svg></button><button aria-label="Table" class="drop"><svg><use href="#table"/></svg></button><button aria-label="Graph"><svg><use href="#graph"/></svg></button><button aria-label="Lock" class="drop"><svg><use href="#shield"/></svg></button><button aria-label="Structure"><svg><use href="#struct"/></svg></button></div>
  <div class="group"><button aria-label="Fly"><svg><use href="#fly"/></svg></button><button aria-label="Fit all"><svg><use href="#fit"/></svg></button><button aria-label="Pan"><svg><use href="#pan"/></svg></button><button aria-label="Rotate"><svg><use href="#rotate"/></svg></button><button aria-label="Zoom in"><svg><use href="#zin"/></svg></button><button aria-label="Zoom out"><svg><use href="#zout"/></svg></button><button aria-label="Normal view"><svg><use href="#normal"/></svg></button><button aria-label="Multi view"><svg><use href="#views"/></svg></button><button aria-label="Isometric" class="drop"><svg><use href="#cube"/></svg></button><button aria-label="Shading" class="drop"><svg><use href="#cyl"/></svg></button><button aria-label="Hide"><svg><use href="#img"/></svg></button><button aria-label="Swap"><svg><use href="#img"/></svg></button></div>
  <div class="group"><button aria-label="Material"><svg><use href="#gear"/></svg></button><button aria-label="Check model"><svg><use href="#horse"/></svg></button><button aria-label="Compute"><svg><use href="#gears"/></svg></button></div>
  <div class="group"><button aria-label="Tree"><svg><use href="#tree"/></svg></button></div>
  <div class="group"><button aria-label="Histogram"><svg><use href="#bars"/></svg></button><button aria-label="Arc"><svg><use href="#arc"/></svg></button><button aria-label="Wave"><svg><use href="#wave"/></svg></button><button aria-label="Stress"><svg><use href="#stress"/></svg></button><button aria-label="Displacement"><svg><use href="#stress"/></svg></button><button aria-label="Principal"><svg><use href="#stress"/></svg></button><button aria-label="Precision"><svg><use href="#dimens"/></svg></button></div>
</footer>
</body>
</html>
```
FILE: styles.css
```css
* { box-sizing: border-box; }
body {
  margin: 0;
  height: 100vh;
  display: flex;
  flex-direction: column;
  overflow: hidden;
  font-family: "Open Sans", "Noto Sans CJK SC", sans-serif;
  font-size: 6px;
  background: #d0d0e6;
}
button, input, select { font: inherit; color: inherit; margin: 0; padding: 0; border: 0; background: none; }
svg { display: block; }
.defs { position: absolute; width: 0; height: 0; }

.titlebar { display: flex; align-items: center; height: 10px; padding-left: 1px; gap: 2px; background: #f4f3f4; color: #8c8c90; font-family: Roboto, sans-serif; line-height: 10px; }
.app-icon { width: 8px; height: 8px; }
.winctl { width: 50px; height: 10px; margin-left: auto; }
.menubar { display: flex; align-items: center; height: 10px; background: #cfcfe6; color: #222; line-height: 9px; }
.menubar button { width: 17px; height: 9px; line-height: 9px; white-space: nowrap; }
.menubar .current { background: #fddcaa; color: #a04810; width: 19px; }
.menubar .wide { width: 50px; }
.mdictl { width: 18px; height: 9px; margin-left: auto; }

.toolbar { display: flex; align-items: center; background: linear-gradient(#e6e6f6, #cfcfe6 30%, #cfcfe6); }
.top { height: 17px; border-bottom: 2px solid #7a7a88; padding-left: 8px; }
.combos { display: flex; gap: 2px; margin-right: 2px; }
.combo { position: relative; width: 31px; height: 11px; background: #fff; border: 1px solid #b8b8cc; }
.combo.narrow { width: 19px; }
.combo.off { background: #e6e6ee; color: #aaa; }
.combo select { width: 100%; height: 9px; padding-left: 2px; line-height: 9px; appearance: none; display: block; opacity: 1; }
.combo.narrow select { padding-right: 6px; }
.combo svg { position: absolute; right: 1px; top: 3px; width: 6px; height: 4px; fill: none; stroke: #666; stroke-width: .8; }
.group { display: flex; }
.group + .group { margin-left: 3px; padding-left: 5px; border-left: 1px solid #f8f8ff; }
.group button { width: 13px; height: 12px; display: grid; place-items: center; position: relative; }
.group svg { width: 10px; height: 10px; }
.tight button { width: 12px; }
.drop::after { content: ""; position: absolute; right: 0; bottom: 0; border: 2px solid transparent; border-top-color: #111; border-bottom: 0; }
.group .fx { font: italic 8px "Liberation Serif", serif; }
.bottom { height: 15px; border-top: 2px solid #f8f8ff; padding-left: 7px; flex: none; }

main { position: relative; flex: 1; min-height: 0; display: flex; background: linear-gradient(#333366, #3c3c6b 22%, #454574 52%, #505080 66%, #8585a4 87%, #a9a9bd); }
.scroller { width: 11px; flex: none; display: flex; flex-direction: column; justify-content: space-between; background: #7a7af6; border-left: 1px solid #888; }
.scroller button { height: 11px; display: grid; place-items: center; background: #6464dc; }
.scroller svg { width: 8px; height: 8px; }
.stage { flex: 1; min-width: 0; }
.dock { width: 8px; flex: none; overflow: hidden; display: flex; flex-direction: column; justify-content: space-between; padding: 8px 0 10px 3px; background: #e6e6f4; border-left: 1px solid #fff; }
.dock svg { width: 11px; height: 11px; flex: none; }
.dock hr { width: 100%; margin: 0; border: 0; border-top: 1px solid #b0b0c4; }

.tree, .tree ul { list-style: none; margin: 0; padding: 0; }
.tree { color: #fff; font-family: Lato, sans-serif; font-size: 10px; padding-left: 2px; }
.tree ul { padding-left: 12px; }
.tree li { position: relative; }
.tree li li:has(ul) { margin-bottom: 1px; }
.row { display: flex; align-items: center; height: 17px; gap: 3px; position: relative; z-index: 1; }
.row svg { width: 12px; height: 12px; flex: none; }
.row b { font-weight: 400; line-height: 13px; white-space: nowrap; background: #343466; }
.row .selected { background: #1478f0; }
.row .active { text-decoration: underline; }
.tree li li::before { content: ""; position: absolute; left: -9px; top: 0; width: 1px; height: calc(100% + 1px); background: #c8c8d8; }
.tree li li:last-child::before { height: 9px; }
.tree li li > .row::before { content: ""; position: absolute; left: -9px; top: 8px; width: 8px; height: 1px; background: #c8c8d8; }
.tree .open > .row::after, .tree .shut > .row::after {
  content: "−"; position: absolute; left: -12px; top: 5px; width: 7px; height: 7px; border-radius: 50%;
  background: #a0a0a0; color: #111; font: bold 9px/7px "Liberation Sans", sans-serif; text-align: center;
}
.tree .shut > .row::after { content: "+"; }

.scene { position: absolute; left: 0; top: 0; width: 865px; height: 405px; pointer-events: none; z-index: 1; }
.axis { fill: #d8d020; font-size: 7px; font-weight: 700; }
.axis.pale { fill: #d8d8e8; font-weight: 400; }

.legend { position: absolute; left: 734px; top: 96px; width: 124px; color: #e0e0ec; font-family: Roboto, sans-serif; font-size: 7px; }
.legend p { display: flex; justify-content: center; margin: 0; height: 13px; line-height: 13px; white-space: nowrap; }
.legend .end { justify-content: flex-end; }
.scale { display: flex; gap: 12px; padding-left: 44px; height: 140px; margin-bottom: 1px; }
.ramp { width: 6px; margin: 8px 0 4px; display: flex; flex-direction: column; }
.ramp i { flex: 1; background: #d40000; }
.ramp i:nth-child(2) { background: #ff5a10; }
.ramp i:nth-child(3) { background: #ffb428; }
.ramp i:nth-child(4) { background: #ffff00; }
.ramp i:nth-child(5) { background: #80ff00; }
.ramp i:nth-child(6) { background: #00e400; }
.ramp i:nth-child(7) { background: #00d868; }
.ramp i:nth-child(8) { background: #00f0f0; }
.ramp i:nth-child(9) { background: #1088ff; }
.ramp i:nth-child(10) { background: #0000e0; }
.values { display: flex; flex-direction: column; justify-content: space-between; line-height: 12px; }

.palette { position: absolute; z-index: 2; width: 17px; display: flex; flex-direction: column; align-items: center; gap: 3px; padding-bottom: 3px; background: #e2e2f4; border: 1px solid #f4f4fc; box-shadow: 0 0 1px #444; }
.palette h2 { align-self: stretch; display: flex; justify-content: space-between; margin: 0 0 4px; padding-left: 1px; height: 12px; font-size: 6px; line-height: 12px; font-weight: 400; color: #888; background: #e8e8e8; }
.palette h2 button { width: 8px; height: 8px; margin: 2px 0; background: #fff; }
.palette svg { width: 11px; height: 11px; }
.palette hr { width: 100%; margin: 0; border: 0; border-top: 1px solid #b4b4cc; }
.p-g { left: 724px; top: 97px; height: 74px; }
.p-m { left: 819px; top: 136px; height: 135px; gap: 2px; }
.p-n { left: 739px; top: 197px; height: 31px; }
.p-i { left: 723px; top: 238px; height: 57px; }
.p-v { left: 751px; top: 280px; height: 45px; }
.p-l { left: 788px; top: 285px; height: 112px; }
.p-c { left: 827px; top: 294px; height: 73px; }
.p-a { left: 744px; top: 330px; height: 64px; }

.dialog { position: absolute; left: 526px; top: 102px; width: 171px; height: 138px; z-index: 1; display: flex; flex-direction: column; background: #fde3c0; color: #333; border-radius: 3px; overflow: hidden; box-shadow: 0 0 3px #181830; }
.dialog > header { display: flex; align-items: center; height: 13px; background: #eef4fa; padding: 0 7px 0 2px; gap: 12px; font-family: Lato, "DejaVu Sans", sans-serif; }
.dialog > header span { flex: 1; }
.dialog > header button { width: 8px; }
.tabs { display: flex; height: 17px; padding: 5px 0 0 5px; }
.tabs button { height: 12px; padding: 0 5px; line-height: 10px; border-right: 1px solid #655; border-top: 1px solid transparent; }
.tabs .on { border-left: 1px solid #fff; border-top-color: #fff; }
.panel { margin: 0 5px; height: 87px; padding: 0 1px; border: 1px solid #fff; border-right-color: #655; border-bottom: 2px solid #655; }
.field { display: flex; align-items: center; height: 13px; gap: 2px; }
.field label { width: 49px; white-space: nowrap; }
.field .size { width: 57px; padding-left: 1px; color: #a08870; }
.strong { font-weight: 700; }
.field input[type="text"] { width: 64px; height: 11px; padding-left: 2px; background: #fff; border: 1px solid #ccb8a0; border-width: 1px 0 0 1px; }
.field input.focus { border-bottom: 1px solid #1468c8; color: #fff; background: linear-gradient(90deg, #fff 2px, #1478d8 2px, #1478d8 16px, #fff 16px); }
.field input.off { width: 55px; background: #eeebe6; color: #888; border-color: #888; }
.field .spin { width: 9px; height: 10px; margin-left: -2px; }
.field button { width: 12px; height: 10px; background: #f4ecd8; border: 1px solid #998; }
.field button svg { width: 10px; height: 8px; }
.panel input[type="checkbox"], .panel input[type="radio"] { appearance: none; width: 6px; height: 6px; border: 1px solid #555; background: #fff; flex: none; }
.panel input[type="checkbox"]:checked { background: #f08820; border-color: #d8a878; }
.panel input[type="radio"] { border-radius: 50%; }
.panel input[type="radio"]:checked { background: #203c90; }
fieldset { display: flex; align-items: center; gap: 1px; height: 32px; margin: 11px 0 0; padding: 0 0 8px; border: 1px solid #bba898; }
legend { padding: 0 2px; margin-left: 2px; line-height: 8px; }
fieldset svg { width: 10px; height: 10px; margin-left: 1px; }
.dialog footer { flex: 1; display: flex; align-items: center; justify-content: flex-end; gap: 3px; padding-right: 5px; }
.dialog footer button { display: flex; align-items: center; justify-content: center; gap: 2px; width: 25px; height: 10px; line-height: 8px; background: #e4d8c8; border: 1px solid #665; }
.dialog footer i { width: 5px; height: 5px; border-radius: 50%; background: #20a820; }
.dialog footer .no { background: #e03828; }
.swoosh { width: 20px; height: 14px; margin-right: auto; align-self: flex-end; }

.watermark { position: absolute; left: 670px; top: 363px; z-index: 3; display: flex; align-items: center; gap: 6px; color: #fff; font: 21px/32px "Noto Sans CJK SC", sans-serif; text-shadow: 1px 1px 1px #333; white-space: nowrap; }
.watermark svg { width: 36px; height: 32px; }
.cats { position: absolute; left: 789px; top: 388px; width: 75px; height: 32px; z-index: 3; }
```
